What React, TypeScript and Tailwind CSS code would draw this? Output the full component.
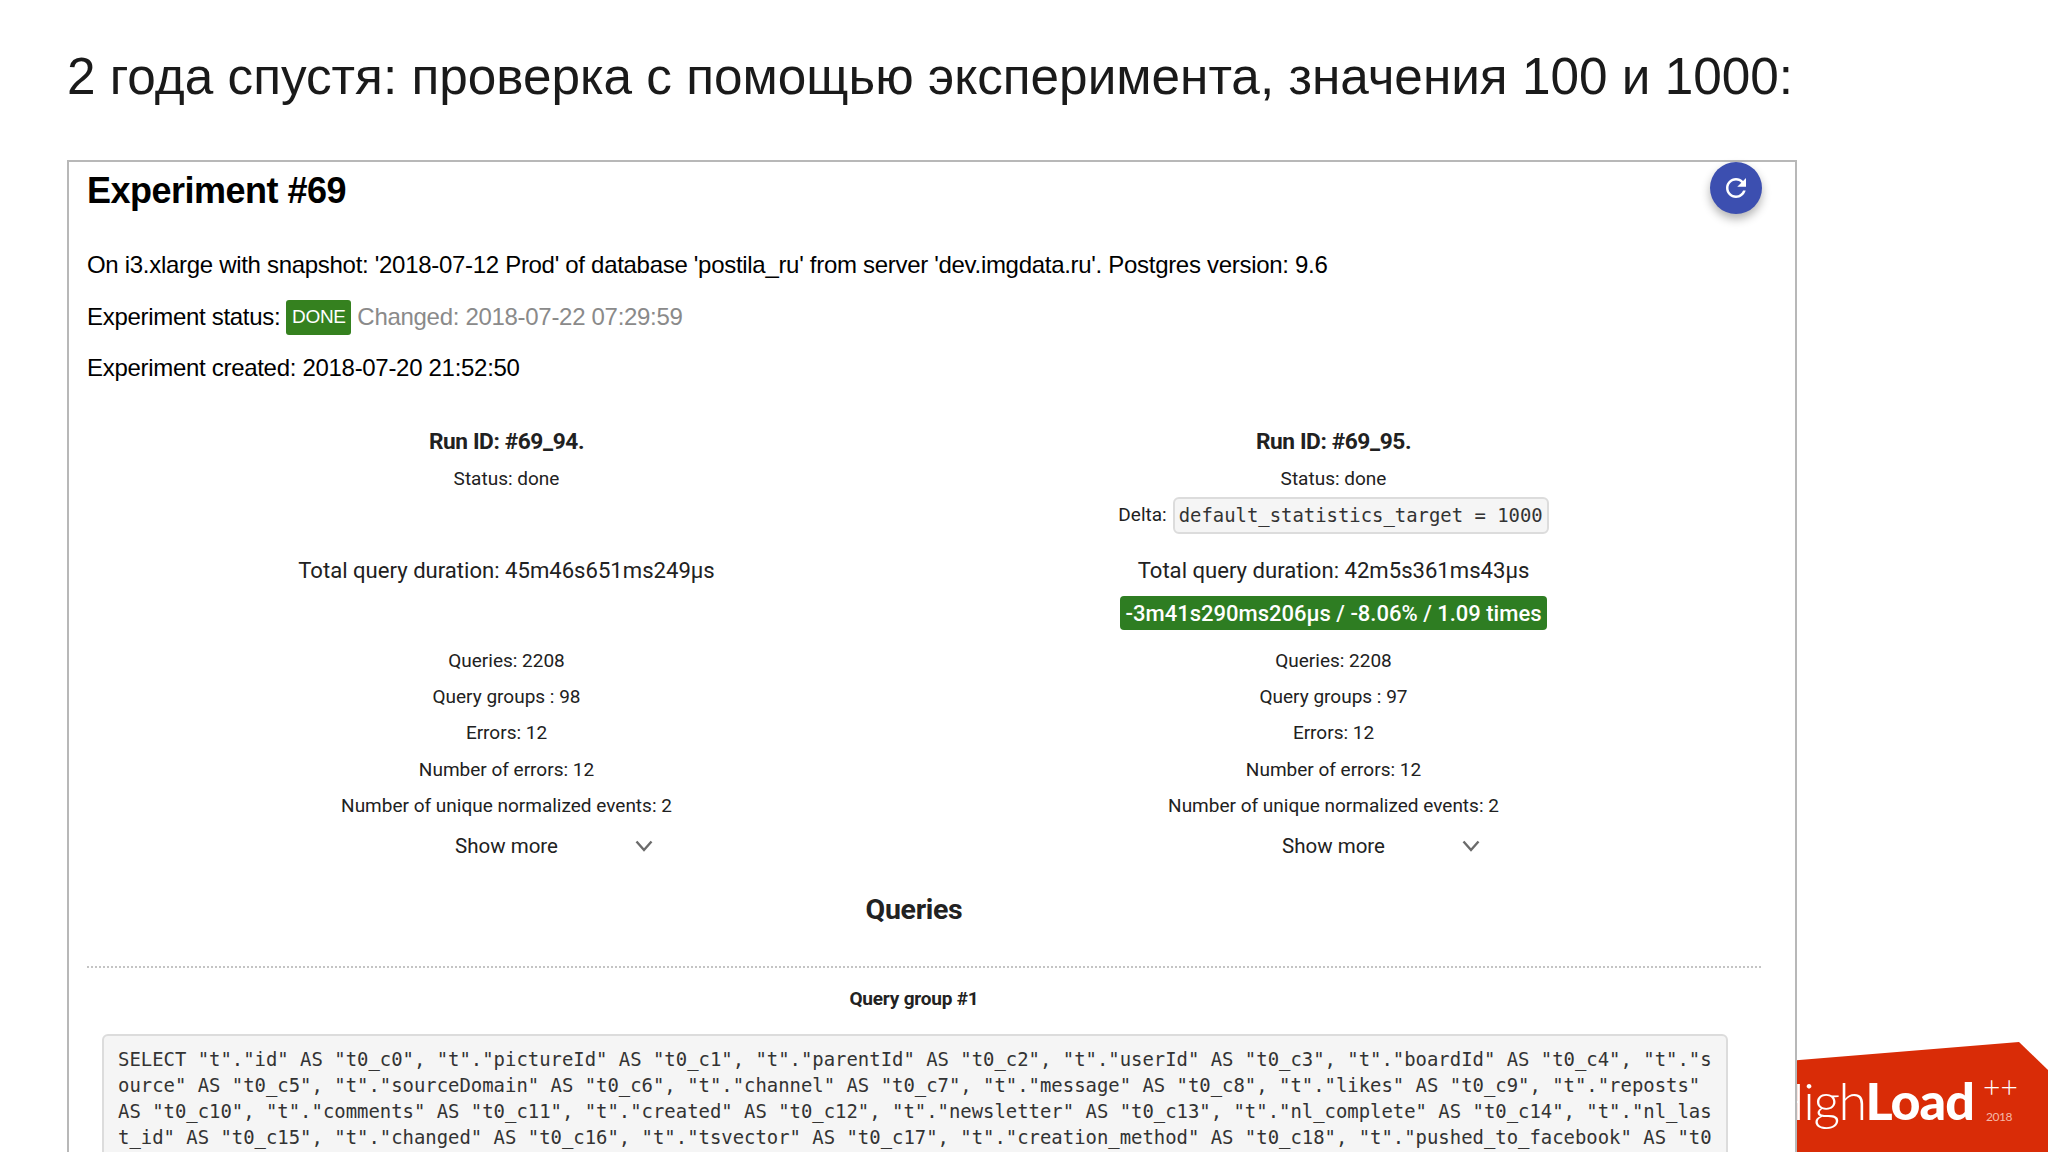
import React from "react";

const sql =
  'SELECT "t"."id" AS "t0_c0", "t"."pictureId" AS "t0_c1", "t"."parentId" AS "t0_c2", "t"."userId" AS "t0_c3", "t"."boardId" AS "t0_c4", "t"."source" AS "t0_c5", "t"."sourceDomain" AS "t0_c6", "t"."channel" AS "t0_c7", "t"."message" AS "t0_c8", "t"."likes" AS "t0_c9", "t"."reposts" AS "t0_c10", "t"."comments" AS "t0_c11", "t"."created" AS "t0_c12", "t"."newsletter" AS "t0_c13", "t"."nl_complete" AS "t0_c14", "t"."nl_last_id" AS "t0_c15", "t"."changed" AS "t0_c16", "t"."tsvector" AS "t0_c17", "t"."creation_method" AS "t0_c18", "t"."pushed_to_facebook" AS "t0_c19"';

const stats = (groups: number) => [
  "Queries: 2208",
  `Query groups : ${groups}`,
  "Errors: 12",
  "Number of errors: 12",
  "Number of unique normalized events: 2",
];

function Chevron() {
  return (
    <svg width="20" height="20" viewBox="0 0 20 20" fill="none" className="ml-[76px]">
      <path d="M2.5 5.5 10 14l7.5-8.5" stroke="#6b6b6b" strokeWidth="2.4" />
    </svg>
  );
}

function RunColumn({
  id,
  duration,
  groups,
  delta,
  diff,
}: {
  id: string;
  duration: string;
  groups: number;
  delta?: string;
  diff?: string;
}) {
  return (
    <div className="flex flex-col items-center text-[#212121] font-['Roboto',sans-serif]">
      <div className="h-8 flex items-center text-[22.7px] font-bold tracking-[-0.4px]">Run ID: {id}</div>
      <div className="mt-[3px] h-9 flex items-center text-[19px]">Status: done</div>
      <div className="h-9 flex items-center text-[19px]">
        {delta && (
          <>
            <span>Delta:</span>
            <code className="ml-[6px] h-[37px] px-[4px] flex items-center bg-[#f5f5f5] border-2 border-[#dcdcdc] rounded-[6px] font-['DejaVu_Sans_Mono',monospace] text-[18.9px] text-[#333]">
              {delta}
            </code>
          </>
        )}
      </div>
      <div className="mt-[22px] h-8 flex items-center text-[22.1px]">Total query duration: {duration}</div>
      <div className="mt-[9px] h-[34px] flex items-center">
        {diff && (
          <span className="h-[34px] px-[5px] flex items-center bg-[#2e7d22] text-white rounded-[4px] text-[22px] font-medium">
            {diff}
          </span>
        )}
      </div>
      <div className="mt-[13px] w-full flex flex-col items-center">
        {stats(groups).map((s) => (
          <div key={s} className="h-[36.25px] flex items-center text-[19px]">
            {s}
          </div>
        ))}
      </div>
      <div className="mt-[4px] h-9 w-full grid grid-cols-[1fr_auto_1fr] items-center">
        <div />
        <span className="text-[20.5px]">Show more</span>
        <Chevron />
      </div>
    </div>
  );
}

export default function App() {
  return (
    <div className="relative w-[2048px] h-[1152px] overflow-hidden bg-white font-['Liberation_Sans',sans-serif]">
      <h1 className="pl-[67px] pt-[46px] h-[160px] text-[51.3px] leading-[62px] text-[#1a1a1a] whitespace-nowrap">
        2 года спустя: проверка с помощью эксперимента, значения 100 и 1000:
      </h1>

      <div className="relative z-10 ml-[67px] w-[1730px] h-[1100px] border-2 border-[#b8b8b8] bg-white pl-[18px] text-black">
        <h2 className="mt-[7px] h-[44px] flex items-center text-[36px] font-bold tracking-[-0.5px]">Experiment #69</h2>
        <button className="absolute left-[1641px] top-0 w-[52px] h-[52px] rounded-full bg-[#3c4fb0] shadow-[0_5px_10px_rgba(0,0,0,0.3)] flex items-center justify-center">
          <svg width="30" height="30" viewBox="0 0 24 24" fill="white">
            <path d="M17.65 6.35C16.2 4.9 14.21 4 12 4c-4.42 0-7.99 3.58-7.99 8s3.57 8 7.99 8c3.73 0 6.84-2.55 7.73-6h-2.08c-.82 2.33-3.04 4-5.65 4-3.31 0-6-2.69-6-6s2.69-6 6-6c1.66 0 3.14.69 4.22 1.78L13 11h7V4l-2.35 2.35z" />
          </svg>
        </button>

        <div className="mt-[36px] text-[24px] leading-[32px] tracking-[-0.3px]">
          On i3.xlarge with snapshot: '2018-07-12 Prod' of database 'postila_ru' from server 'dev.imgdata.ru'. Postgres version: 9.6
        </div>
        <div className="mt-[18px] h-9 flex items-center text-[24px] tracking-[-0.3px]">
          <span>Experiment status:</span>
          <span className="ml-[6px] h-[35px] w-[65px] flex items-center justify-center bg-[#35811f] text-white text-[19px] rounded-[3px]">DONE</span>
          <span className="ml-[6px] text-[#8a8a8a]">Changed: 2018-07-22 07:29:59</span>
        </div>
        <div className="mt-[17px] text-[24px] leading-[32px] tracking-[-0.3px]">Experiment created: 2018-07-20 21:52:50</div>

        <div className="mt-[42px] ml-[6px] w-[1654px] grid grid-cols-2">
          <RunColumn id="#69_94." duration="45m46s651ms249µs" groups={98} />
          <RunColumn
            id="#69_95."
            duration="42m5s361ms43µs"
            groups={97}
            delta="default_statistics_target = 1000"
            diff="-3m41s290ms206µs / -8.06% / 1.09 times"
          />
        </div>

        <div className="w-[1674px] font-['Roboto',sans-serif]">
          <div className="mt-[25px] h-9 w-[1654px] text-center text-[28.5px] font-bold text-[#222] tracking-[-0.3px]">Queries</div>
          <div className="mt-[41px] border-t-2 border-dotted border-[#c4c4c4]" />
          <div className="mt-[17px] w-[1654px] text-center text-[19px] font-bold text-[#222] tracking-[-0.2px]">Query group #1</div>
          <pre className="mt-[20px] ml-[15px] w-[1626px] h-[200px] pl-[14px] pr-[10px] py-[10px] bg-[#f5f5f5] border-2 border-[#dcdcdc] rounded-[6px] font-['DejaVu_Sans_Mono',monospace] text-[18.92px] leading-[26px] text-[#333] whitespace-pre-wrap break-all">
            {sql}
          </pre>
        </div>
      </div>

      {/* conference logo in the corner */}
      <div className="absolute left-[1700px] top-[1042px] w-[348px] h-[110px] bg-[#d92c07] [clip-path:polygon(0_26px,319px_0,348px_28px,348px_110px,0_110px)] text-white font-['Lato',sans-serif]">
        <div className="absolute left-[66px] top-[28px] flex items-baseline text-[52px] leading-[60px] tracking-[-1px] whitespace-nowrap">
          <span className="font-light tracking-[-1.5px]">High</span>
          <span className="font-black">Load</span>
        </div>
        <span className="absolute left-[283px] top-[29px] text-[30px] leading-[30px] font-light">++</span>
        <span className="absolute left-[286px] top-[66px] text-[12px] tracking-[-0.5px] text-[#f4b8a8]">2018</span>
      </div>
    </div>
  );
}
